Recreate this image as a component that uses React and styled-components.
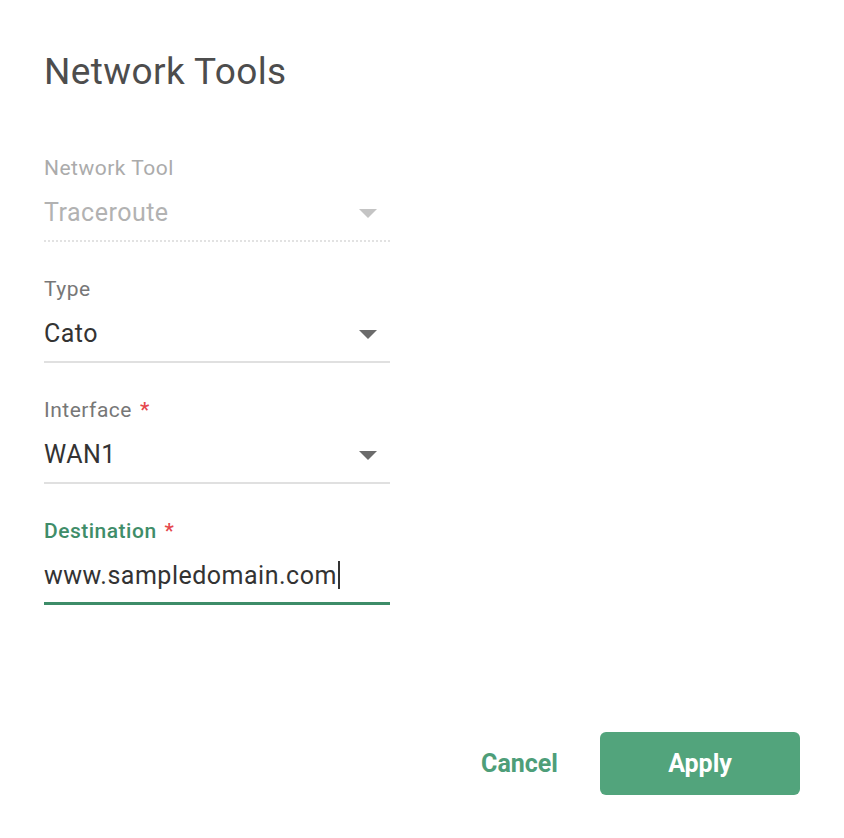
import styled, { createGlobalStyle } from "styled-components";

const GlobalStyle = createGlobalStyle`
  html, body { margin: 0; padding: 0; background: #fff; }
  body { font-family: Roboto, "Noto Sans", Arial, sans-serif; }
  * { box-sizing: border-box; }
`

const Page = styled.div`min-height: 100vh; display: flex; flex-direction: column; padding: 52px 44px 43px 44px;`
const Title = styled.h1`margin: 0; font-size: 37px; line-height: 40px; font-weight: 400; letter-spacing: 0.4px; color: #4d4d4d;`
const Form = styled.div`width: 346px; margin-top: 64px; display: flex; flex-direction: column; gap: 35px;`
const Field = styled.div`display: flex; flex-direction: column;`
const Label = styled.div`font-size: 21px; line-height: 24px; letter-spacing: 0.5px; font-weight: ${p => p.$focused ? 500 : 400};
  color: ${p => p.$focused ? "#3f8d69" : p.$disabled ? "#ababab" : "#777"};`
const Star = styled.span`color: #e5484d; margin-left: 8px; font-weight: 500;`
const InputRow = styled.div`margin-top: 5px; height: 57px; display: flex; align-items: center; justify-content: space-between;
  font-size: 25px; letter-spacing: 0.5px; color: ${p => p.$disabled ? "#b2b2b2" : "#333"};
  border-bottom: ${p => p.$focused ? "3px solid #3d8c68" : p.$disabled ? "2px dotted #e2e2e2" : "2px solid #e0e0e0"};`
const Caret = styled.span`display: inline-block; width: 2px; height: 28px; background: #333; vertical-align: middle; margin-left: 1px; margin-top: -4px;`
const Arrow = styled.span`width: 0; height: 0; margin-right: 13px; margin-top: 2px;
  border-left: 9px solid transparent; border-right: 9px solid transparent;
  border-top: 9px solid ${p => p.$disabled ? "#c4c4c4" : "#6b6b6b"};`
const Footer = styled.div`margin-top: auto; display: flex; justify-content: flex-end; align-items: center; gap: 32px;`
const TextButton = styled.button`border: none; background: none; padding: 10px; font-family: inherit; font-size: 25px; font-weight: 700; color: #4e9e79; cursor: pointer;`
const PrimaryButton = styled.button`border: none; width: 200px; height: 63px; border-radius: 6px; background: #52a47c; color: #fff;
  font-family: inherit; font-size: 25px; font-weight: 700; cursor: pointer;`

const SelectField = ({ label, value, required, disabled }) => (
  <Field>
    <Label $disabled={disabled}>{label}{required && <Star>*</Star>}</Label>
    <InputRow $disabled={disabled}>
      <span>{value}</span>
      <Arrow $disabled={disabled} />
    </InputRow>
  </Field>
)

export default function App() {
  return (
    <Page>
      <GlobalStyle />
      <Title>Network Tools</Title>
      <Form>
        <SelectField label="Network Tool" value="Traceroute" disabled />
        <SelectField label="Type" value="Cato" />
        <SelectField label="Interface" value="WAN1" required />
        <Field>
          <Label $focused>Destination<Star>*</Star></Label>
          <InputRow $focused>
            <span>www.sampledomain.com<Caret /></span>
          </InputRow>
        </Field>
      </Form>
      <Footer>
        <TextButton>Cancel</TextButton>
        <PrimaryButton>Apply</PrimaryButton>
      </Footer>
    </Page>
  )
}
